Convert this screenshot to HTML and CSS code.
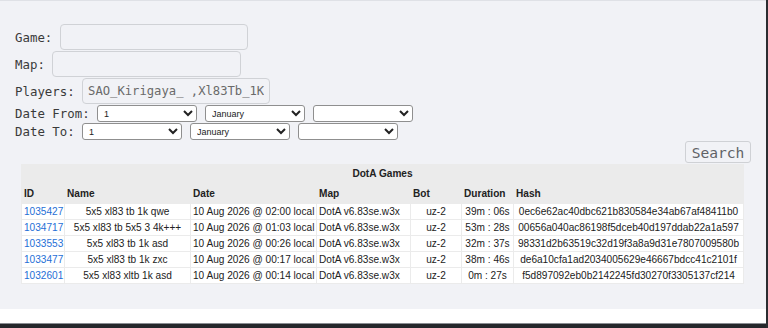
FILE: index.html
```html
<!DOCTYPE html>
<html lang="en">
<head>
    <meta charset="UTF-8">
    <meta name="viewport" content="width=device-width, initial-scale=1.0">
    <title>DotA Games</title>
    <link rel="stylesheet" href="styles.css">
</head>
<body>
    <div class="frame">
        <div class="panel">
            <form class="filters">
                <div class="row">
                    <label for="game">Game:</label>
                    <input type="text" id="game" class="field game">
                </div>
                <div class="row">
                    <label for="map">Map:</label>
                    <input type="text" id="map" class="field map">
                </div>
                <div class="row">
                    <label for="players">Players:</label>
                    <input type="text" id="players" class="field" value="SAO_Kirigaya_ ,Xl83Tb_1K">
                </div>
                <div class="row date-row">
                    <label>Date From:</label>
                    <select><option>1</option></select>
                    <select><option>January</option></select>
                    <select><option></option></select>
                </div>
                <div class="row date-row">
                    <label>Date To:</label>
                    <select><option>1</option></select>
                    <select><option>January</option></select>
                    <select><option></option></select>
                </div>
                <div class="actions">
                    <button type="button">Search</button>
                </div>
            </form>

            <table class="games">
                <colgroup>
                    <col style="width:42px">
                    <col style="width:125px">
                    <col style="width:125px">
                    <col style="width:93px">
                    <col style="width:50px">
                    <col style="width:51px">
                    <col>
                </colgroup>
                <tr class="title"><th colspan="7">DotA Games</th></tr>
                <tr class="head">
                    <th>ID</th><th>Name</th><th>Date</th><th>Map</th><th>Bot</th><th>Duration</th><th>Hash</th>
                </tr>
                <tr>
                    <td><a href="#">1035427</a></td><td class="c">5x5 xl83 tb 1k qwe</td><td>10 Aug 2026 @ 02:00 local</td><td>DotA v6.83se.w3x</td><td class="c">uz-2</td><td class="c">39m : 06s</td><td class="c">0ec6e62ac40dbc621b830584e34ab67af48411b0</td>
                </tr>
                <tr>
                    <td><a href="#">1034717</a></td><td class="c">5x5 xl83 tb 5x5 3 4k+++</td><td>10 Aug 2026 @ 01:03 local</td><td>DotA v6.83se.w3x</td><td class="c">uz-2</td><td class="c">53m : 28s</td><td class="c">00656a040ac86198f5dceb40d197ddab22a1a597</td>
                </tr>
                <tr>
                    <td><a href="#">1033553</a></td><td class="c">5x5 xl83 tb 1k asd</td><td>10 Aug 2026 @ 00:26 local</td><td>DotA v6.83se.w3x</td><td class="c">uz-2</td><td class="c">32m : 37s</td><td class="c">98331d2b63519c32d19f3a8a9d31e7807009580b</td>
                </tr>
                <tr>
                    <td><a href="#">1033477</a></td><td class="c">5x5 xl83 tb 1k zxc</td><td>10 Aug 2026 @ 00:17 local</td><td>DotA v6.83se.w3x</td><td class="c">uz-2</td><td class="c">38m : 46s</td><td class="c">de6a10cfa1ad2034005629e46667bdcc41c2101f</td>
                </tr>
                <tr>
                    <td><a href="#">1032601</a></td><td class="c">5x5 xl83 xltb 1k asd</td><td>10 Aug 2026 @ 00:14 local</td><td>DotA v6.83se.w3x</td><td class="c">uz-2</td><td class="c">0m : 27s</td><td class="c">f5d897092eb0b2142245fd30270f3305137cf214</td>
                </tr>
            </table>
        </div>
        <div class="footer"></div>
    </div>
</body>
</html>
```

FILE: styles.css
```css
body {
    margin: 0;
    background: #ffffff;
}
.frame {
    height: 328px;
    border-right: 2px solid #2b2d31;
    box-sizing: border-box;
    overflow: hidden;
}
.panel {
    height: 309px;
    box-sizing: border-box;
    background-color: #f1f2f6;
    border-top: 1px solid #dfe1e6;
    padding: 23px 15px 0 15px;
}
.footer {
    height: 14px;
    background: #ffffff;
    border-bottom: 1px solid #8a8d92;
    box-shadow: 0 4px 0 #25272b;
}
.filters {
    font-family: "DejaVu Sans Mono", monospace;
    font-size: 12.4px;
    color: #3a3a3a;
}
.row {
    display: flex;
    align-items: center;
    gap: 7.4px;
    margin-bottom: 1px;
}
.field {
    width: 188px;
    height: 26px;
    box-sizing: border-box;
    padding: 0 5px;
    border: 1px solid #d0d2d6;
    border-radius: 4px;
    background-color: #f1f2f6;
    font-family: "DejaVu Sans Mono", monospace;
    font-size: 12.2px;
    color: #6a6a6a;
}
.map {
    width: 189px;
}
.date-row {
    gap: 8px;
    height: 17px;
    margin-bottom: 1px;
}
.date-row label {
    margin-right: -0.6px;
}
select {
    width: 100px;
    height: 17px;
    font-family: Arial, "Liberation Sans", sans-serif;
    font-size: 9px;
    color: #222;
    background: #fff;
    border: 1px solid #8f8f8f;
    border-radius: 3px;
    padding: 0 2px;
}
.actions {
    display: flex;
    justify-content: flex-end;
    margin-top: 1px;
}
button {
    width: 66px;
    height: 22px;
    padding: 0;
    font-family: "DejaVu Sans Mono", monospace;
    font-size: 14.6px;
    color: #606266;
    background-color: #f1f2f6;
    border: 1px solid #cfd1d5;
    border-radius: 3px;
}
.games {
    margin-left: 6px;
    margin-top: 1px;
    width: 723px;
    table-layout: fixed;
    border-collapse: separate;
    border-spacing: 1px;
    background-color: #ebebeb;
    font-family: Arial, "Liberation Sans", sans-serif;
    font-size: 10.1px;
    color: #222;
}
.games th {
    text-align: left;
    font-weight: bold;
    padding: 0 2px;
    white-space: nowrap;
}
.games .title th {
    text-align: center;
    height: 17px;
}
.games .head th {
    height: 20px;
}
.games td {
    background: #ffffff;
    height: 15px;
    padding: 0 2px;
    white-space: nowrap;
}
.games td.c {
    text-align: center;
}
.games a {
    color: #1f6fd6;
    text-decoration: none;
}
```
